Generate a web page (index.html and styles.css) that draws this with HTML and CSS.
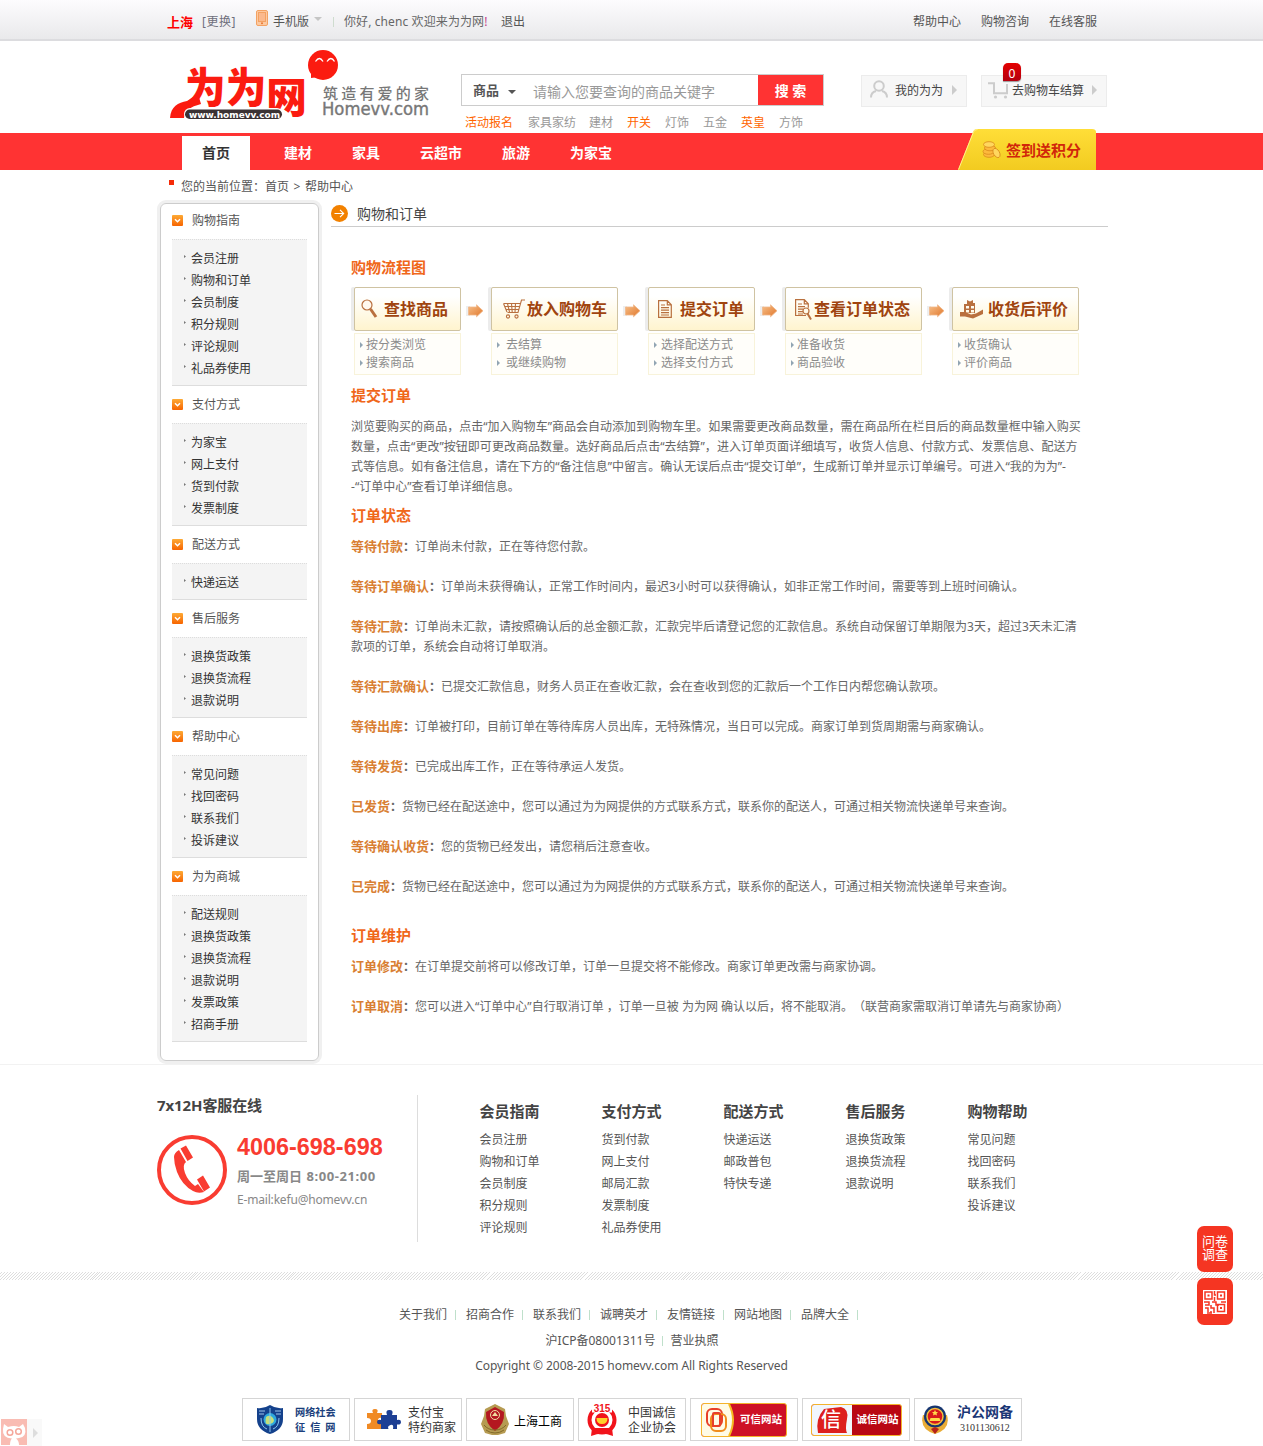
FILE: index.html
```html
<!DOCTYPE html>
<html lang="zh-CN">
<head>
<meta charset="utf-8">
<title>帮助中心 - 为为网</title>
<link rel="stylesheet" href="styles.css">
</head>
<body>
<svg width="0" height="0" class="defs" aria-hidden="true">
  <defs>
    <linearGradient id="orange" x1="0" y1="0" x2="1" y2="1"><stop offset="0" stop-color="#f7c08a"/><stop offset="1" stop-color="#e0762a"/></linearGradient>
    <linearGradient id="yellow" x1="0" y1="0" x2="0" y2="1"><stop offset="0" stop-color="#ffde38"/><stop offset="1" stop-color="#f2cb20"/></linearGradient>
    <linearGradient id="fold" x1="0" y1="0" x2="0" y2="1"><stop offset="0" stop-color="#fdaa35"/><stop offset="1" stop-color="#f76400"/></linearGradient>
    <symbol id="toggle" viewBox="0 0 11 11"><rect width="11" height="11" rx="1" fill="url(#fold)"/><path d="M3 4.2 5.5 6.7 8 4.2" fill="none" stroke="#fff" stroke-width="1.5"/></symbol>
    <symbol id="arrow" viewBox="0 0 20 14"><path d="M0 2h4v10H0z" fill="#eee"/><path d="M2.500 3h8V.8l6.500 6-6.500 6V11h-8z" fill="url(#orange)" stroke="#f0b88a" stroke-width=".8"/></symbol>
  </defs>
</svg>

<div class="topbar">
  <div class="wrap topbar-in">
    <b class="city">上海</b>
    <a class="change">[更换]</a>
    <svg class="phone-ico" width="12" height="16" viewBox="0 0 12 16"><rect x=".5" y=".5" width="11" height="15" rx="1.500" fill="#fdc9a0" stroke="#f3a263"/><rect x="2.500" y="2.500" width="7" height="9" fill="#fbb98d" stroke="#f3a263"/><circle cx="6" cy="13.300" r="1" fill="#e97834"/></svg>
    <a class="mobile">手机版</a>
    <i class="caret-light"></i>
    <i class="bar"></i>
    <span class="hello">你好, chenc 欢迎来为为网<em>!</em></span>
    <a class="logout">退出</a>
    <nav class="top-right"><a>帮助中心</a><a>购物咨询</a><a>在线客服</a></nav>
  </div>
</div>

<header class="wrap header">
  <svg class="logo" width="262" height="72" viewBox="0 0 262 72">
    <path d="M0 68C1 56 8 53 17 51L28 44 31 54C20 57 15 60 14 68Z" fill="#fb1b10"/>
    <text x="15" y="53" class="logo-cn" textLength="122" lengthAdjust="spacingAndGlyphs">为为<tspan dy="10">网</tspan></text>
    <rect x="14" y="58" width="99" height="12" rx="6" fill="#fff"/>
    <rect x="15" y="59.500" width="97" height="9.500" rx="4.700" fill="#3b3234"/>
    <text x="19" y="67.500" class="logo-url" textLength="91" lengthAdjust="spacingAndGlyphs">www.homevv.com</text>
    <circle cx="153" cy="15" r="15" fill="#fb1b10"/>
    <path d="M141 20v8l8-1z" fill="#fb1b10"/>
    <path d="M145.500 11.500q4-6 7.500 0M157 11.500q4-6 7.500 0" fill="none" stroke="#fff" stroke-width="1.300"/>
    <text x="153" y="48.500" class="logo-tag" textLength="106">筑造有爱的家</text>
    <text x="152" y="64.500" class="logo-en" textLength="107" lengthAdjust="spacingAndGlyphs">Homevv.com</text>
  </svg>
  <div class="search">
    <div class="search-box">
      <b class="kind">商品</b><i class="caret-dark"></i>
      <span class="ph">请输入您要查询的商品关键字</span>
      <b class="go">搜 索</b>
    </div>
    <div class="hot"><a class="on">活动报名</a><a>家具家纺</a><a>建材</a><a class="on">开关</a><a>灯饰</a><a>五金</a><a class="on">英皇</a><a>方饰</a></div>
  </div>
  <a class="pill mine">
    <svg width="18" height="18" viewBox="0 0 18 18" fill="none" stroke="#ccc" stroke-width="2"><circle cx="9" cy="6" r="4.800"/><path d="M1 17.500c0-4 3-6 5-6.500M17 17.500c0-4-3-6-5-6.500"/></svg>
    <span>我的为为</span><i class="tri"></i>
  </a>
  <a class="pill cart">
    <svg width="20" height="17" viewBox="0 0 20 17"><path d="M0 1.200h6v10h13V2" fill="none" stroke="#ccc" stroke-width="2"/><circle cx="7.500" cy="15" r="1.600" fill="#ccc"/><circle cx="17.500" cy="15" r="1.600" fill="#ccc"/></svg>
    <span>去购物车结算</span><i class="tri"></i>
    <b class="count">0</b>
  </a>
</header>

<div class="nav">
  <div class="wrap nav-in">
    <a class="cur">首页</a><a>建材</a><a>家具</a><a>云超市</a><a>旅游</a><a>为家宝</a>
    <div class="sign">
      <svg class="sign-bg" width="138" height="41" viewBox="0 0 138 41"><path d="M0 41 15 3q1-3 4-3h115q4 0 4 3v38z" fill="url(#yellow)"/><path d="M.5 40.500 15.500 3q1-2.500 4-2.500" fill="none" stroke="#fff08a"/></svg>
      <svg class="coins" width="19" height="18" viewBox="0 0 19 18" fill="#fdb93c" stroke="#d98a1c" stroke-width=".8"><ellipse cx="7" cy="13.500" rx="5.500" ry="2.800"/><ellipse cx="6.500" cy="10.500" rx="5.500" ry="2.800"/><ellipse cx="8" cy="7" rx="5.500" ry="2.800"/><ellipse cx="7" cy="3.500" rx="5.500" ry="2.800" fill="#ffd75e"/><ellipse cx="14.500" cy="12" rx="3" ry="5" transform="rotate(-30 14.500 12)" fill="#ffd75e"/></svg>
      <b>签到送积分</b>
    </div>
  </div>
</div>

<div class="wrap crumb"><i></i><span>您的当前位置：</span><a>首页</a><s>&gt;</s><span>帮助中心</span></div>

<div class="wrap body">
  <aside class="side">
    <h3><svg width="11" height="11"><use href="#toggle"/></svg>购物指南</h3>
    <ul><li>会员注册</li><li>购物和订单</li><li>会员制度</li><li>积分规则</li><li>评论规则</li><li>礼品券使用</li></ul>
    <h3><svg width="11" height="11"><use href="#toggle"/></svg>支付方式</h3>
    <ul><li>为家宝</li><li>网上支付</li><li>货到付款</li><li>发票制度</li></ul>
    <h3><svg width="11" height="11"><use href="#toggle"/></svg>配送方式</h3>
    <ul><li>快递运送</li></ul>
    <h3><svg width="11" height="11"><use href="#toggle"/></svg>售后服务</h3>
    <ul><li>退换货政策</li><li>退换货流程</li><li>退款说明</li></ul>
    <h3><svg width="11" height="11"><use href="#toggle"/></svg>帮助中心</h3>
    <ul><li>常见问题</li><li>找回密码</li><li>联系我们</li><li>投诉建议</li></ul>
    <h3><svg width="11" height="11"><use href="#toggle"/></svg>为为商城</h3>
    <ul><li>配送规则</li><li>退换货政策</li><li>退换货流程</li><li>退款说明</li><li>发票政策</li><li>招商手册</li></ul>
  </aside>

  <main class="main">
    <h1><svg width="17" height="17" viewBox="0 0 17 17"><circle cx="8.500" cy="8.500" r="8.500" fill="#f28100"/><path d="M3.500 8.500h9M9 4.800l3.700 3.700L9 12.200" fill="none" stroke="#fff" stroke-width="1.100"/></svg>购物和订单</h1>
    <div class="article">
      <h2>购物流程图</h2>
      <div class="flow">
        <div class="step s1">
          <div class="card"><svg width="17" height="20" viewBox="0 0 17 20"><circle cx="6" cy="6" r="5" fill="#fff8ee" stroke="#b9703f" stroke-width="1.200"/><path d="M9.500 10 15 18" stroke="#b9703f" stroke-width="3"/></svg>查找商品</div>
          <ul><li>按分类浏览</li><li>搜索商品</li></ul>
        </div>
        <svg class="next" width="20" height="14"><use href="#arrow"/></svg>
        <div class="step s2">
          <div class="card"><svg width="22" height="20" viewBox="0 0 22 20" fill="none" stroke="#b9703f" stroke-width="1.100"><path d="M22 1h-3.500L15 13.500H4.500M.5 4.500H17M.5 4.500 4 13M4.500 4.500 6.500 13M8.500 4.500l.7 8.500M12.500 4.500 12 13M2 7.500h14.500M3 10.500h12.500"/><circle cx="5" cy="17.500" r="1.600"/><circle cx="13.500" cy="17.500" r="1.600"/></svg>放入购物车</div>
          <ul><li>去结算</li><li>或继续购物</li></ul>
        </div>
        <svg class="next" width="20" height="14"><use href="#arrow"/></svg>
        <div class="step s3">
          <div class="card"><svg width="14" height="18" viewBox="0 0 14 18" fill="none" stroke="#b9703f" stroke-width="1.200"><path d="M.6.6h8.700l4 4.200v12.600H.6zM9.300.6v4.200h4M3 5h4M3 7.700h8M3 10.200h8M3 12.600h8M3 15h8"/></svg>提交订单</div>
          <ul><li>选择配送方式</li><li>选择支付方式</li></ul>
        </div>
        <svg class="next" width="20" height="14"><use href="#arrow"/></svg>
        <div class="step s4">
          <div class="card"><svg width="17" height="21" viewBox="0 0 17 21" fill="none" stroke="#b9703f" stroke-width="1.200"><path d="M11 16.500H.6V.6h8.700l4 4.200v4M9.300.6v4.200h4M3 5h4M3 7.700h7M3 10.200h5M3 12.600h5M3 15h5"/><circle cx="11" cy="12" r="3"/><path d="m12.500 14.500 3.500 6" stroke-width="2"/></svg>查看订单状态</div>
          <ul><li>准备收货</li><li>商品验收</li></ul>
        </div>
        <svg class="next" width="20" height="14"><use href="#arrow"/></svg>
        <div class="step s5">
          <div class="card"><svg width="24" height="20" viewBox="0 0 24 20" fill="#b9703f"><path d="M7 1l3 1.500L13 1v3h2v10H4V5h3zM6 7v2.500h3V7zm5 0v2.500h3V7zM6 11v2.500h3V11zm5 0v2.500h3V11z" fill-rule="evenodd"/><path d="M0 13h5l6 2.500 5-1 7-4v4.500l-10 4.500L5 17.500H0z"/></svg>收货后评价</div>
          <ul><li>收货确认</li><li>评价商品</li></ul>
        </div>
      </div>
      <h2>提交订单</h2>
      <p class="intro">浏览要购买的商品，点击“加入购物车”商品会自动添加到购物车里。如果需要更改商品数量，需在商品所在栏目后的商品数量框中输入购买<br>数量，点击“更改”按钮即可更改商品数量。选好商品后点击“去结算”，进入订单页面详细填写，收货人信息、付款方式、发票信息、配送方<br>式等信息。如有备注信息，请在下方的“备注信息”中留言。确认无误后点击“提交订单”，生成新订单并显示订单编号。可进入“我的为为”-<br>-“订单中心”查看订单详细信息。</p>
      <h2 class="tight">订单状态</h2>
      <p><strong>等待付款</strong><b>：</b>订单尚未付款，正在等待您付款。</p>
      <p><strong>等待订单确认</strong><b>：</b>订单尚未获得确认，正常工作时间内，最迟3小时可以获得确认，如非正常工作时间，需要等到上班时间确认。</p>
      <p><strong>等待汇款</strong><b>：</b>订单尚未汇款，请按照确认后的总金额汇款，汇款完毕后请登记您的汇款信息。系统自动保留订单期限为3天，超过3天未汇清<br>款项的订单，系统会自动将订单取消。</p>
      <p><strong>等待汇款确认</strong><b>：</b>已提交汇款信息，财务人员正在查收汇款，会在查收到您的汇款后一个工作日内帮您确认款项。</p>
      <p><strong>等待出库</strong><b>：</b>订单被打印，目前订单在等待库房人员出库，无特殊情况，当日可以完成。商家订单到货周期需与商家确认。</p>
      <p><strong>等待发货</strong><b>：</b>已完成出库工作，正在等待承运人发货。</p>
      <p><strong>已发货</strong><b>：</b>货物已经在配送途中，您可以通过为为网提供的方式联系方式，联系你的配送人，可通过相关物流快递单号来查询。</p>
      <p><strong>等待确认收货</strong><b>：</b>您的货物已经发出，请您稍后注意查收。</p>
      <p><strong>已完成</strong><b>：</b>货物已经在配送途中，您可以通过为为网提供的方式联系方式，联系你的配送人，可通过相关物流快递单号来查询。</p>
      <h2 class="last">订单维护</h2>
      <p><strong>订单修改</strong><b>：</b>在订单提交前将可以修改订单，订单一旦提交将不能修改。商家订单更改需与商家协调。</p>
      <p><strong>订单取消</strong><b>：</b>您可以进入“订单中心”自行取消订单 ，订单一旦被 为为网 确认以后，将不能取消。（联营商家需取消订单请先与商家协商）</p>
    </div>
  </main>
</div>

<footer>
  <div class="wrap service">
    <div class="hotline">
      <h4>7x12H客服在线</h4>
      <div class="call">
        <svg width="70" height="70" viewBox="0 0 70 70"><circle cx="35" cy="35" r="33" fill="none" stroke="#f93c31" stroke-width="4"/><path d="M17 22q0-4 5-7l7 12q-4 3-1 11t10 13l3-2 6 8q-6 2-11-1-11-6-16-19-3-8-3-15zM23.500 13.500 29 10.500l7 12-5.500 3.500zM40 44.500l6-4L53 52.500l-6 4z" fill="#f93c31"/></svg>
        <div><b class="tel">4006-698-698</b><b class="hours">周一至周日 <span>8:00-21:00</span></b><span class="mail">E-mail:kefu@homevv.cn</span></div>
      </div>
    </div>
    <div class="cols">
      <dl><dt>会员指南</dt><dd>会员注册</dd><dd>购物和订单</dd><dd>会员制度</dd><dd>积分规则</dd><dd>评论规则</dd></dl>
      <dl><dt>支付方式</dt><dd>货到付款</dd><dd>网上支付</dd><dd>邮局汇款</dd><dd>发票制度</dd><dd>礼品券使用</dd></dl>
      <dl><dt>配送方式</dt><dd>快递运送</dd><dd>邮政普包</dd><dd>特快专递</dd></dl>
      <dl><dt>售后服务</dt><dd>退换货政策</dd><dd>退换货流程</dd><dd>退款说明</dd></dl>
      <dl><dt>购物帮助</dt><dd>常见问题</dd><dd>找回密码</dd><dd>联系我们</dd><dd>投诉建议</dd></dl>
    </div>
  </div>
  <div class="hatch"></div>
  <div class="links"><a>关于我们</a><a>招商合作</a><a>联系我们</a><a>诚聘英才</a><a>友情链接</a><a>网站地图</a><a>品牌大全</a></div>
  <div class="icp"><span>沪ICP备08001311号</span><i></i><span>营业执照</span></div>
  <div class="copy">Copyright © 2008-2015 homevv.com All Rights Reserved</div>
  <div class="badges">
    <div class="badge b1"><svg width="28" height="30" viewBox="0 0 28 30"><path d="M1 3q7 1 13-3 6 4 13 3v11q0 11-13 15Q1 25 1 14z" fill="#14418c"/><path d="M3 6h6M3 9h5M19 6h6M20 9h5" stroke="#9dc4ea" stroke-width="1"/><circle cx="14" cy="14.500" r="6.500" fill="#2fa9dd"/><path d="M10 12q4-3 7 1t-3 6-4-7z" fill="#c5e07a"/><path d="M5 13q0 9 6 11M23 13q0 9-6 11M14 3v24" stroke="#8cc6ee" fill="none"/></svg><span>网络社会<br><u>征信网</u></span></div>
    <div class="badge b2"><svg width="36" height="22" viewBox="0 0 36 22"><path d="M1 4h6q-2-4 2-4t2 4h5v5q-4-1-4 2.500t4 2V20H1v-5q4 0 4-3T1 9z" fill="#f08a24"/><path d="M15 6h6q-2-5 2.500-5T26 6h5v5q4-1 4 2t-4 2.500V20h-4q1-5-2.500-4t-2 4H15v-5q-4 1-4-2t4-2z" fill="#1d3f94"/></svg><span>支付宝<br>特约商家</span></div>
    <div class="badge b3"><svg width="30" height="32" viewBox="0 0 30 32"><path d="M15 0 25 5l1 7 3 8-4 9-7 2H12l-7-2-4-9 3-8 1-7z" fill="#b69b52"/><path d="M15 3 24 8q1 12-9 19Q5 20 6 8z" fill="#b41720"/><circle cx="15" cy="11" r="4.500" fill="none" stroke="#f1dda0"/><path d="m12 12 3-4 3 4z" fill="#f1dda0"/><path d="M4 21q4 5 11 5t11-5M6 26q4 3 9 3t9-3" fill="none" stroke="#826b29"/></svg><span>上海工商</span></div>
    <div class="badge b4"><svg width="30" height="34" viewBox="0 0 30 34"><circle cx="15" cy="17" r="12.500" fill="none" stroke="#f1131b" stroke-width="4"/><path d="M5 0h20v9.500H5z" fill="#fff"/><text x="15" y="8.500" text-anchor="middle" class="n315">315</text><circle cx="15" cy="17" r="7" fill="#f1131b"/><path d="M9.500 15h11q0 6-5.500 6t-5.500-6z" fill="#ffd02a"/><path d="M5 25h20l1 8q-6-2.500-11-2.500t-11 2.500z" fill="#f1131b"/></svg><span>中国诚信<br>企业协会</span></div>
    <div class="badge b5"><div class="plate"><svg width="34" height="32" viewBox="0 0 34 32"><path d="M0 0h27q8 16 0 32H0z" fill="#fffbe6"/><path d="M27 0q8 16 0 32" fill="none" stroke="#f6ba21" stroke-width="2"/><g fill="none" stroke-width="2"><rect x="5" y="5" width="15" height="17" rx="5" stroke="#e8402a"/><rect x="9" y="10" width="15" height="17" rx="5" stroke="#f08c1c"/><rect x="11" y="9" width="7" height="13" rx="1" stroke="#e8402a"/></g></svg><span>可信网站</span></div></div>
    <div class="badge b6"><div class="plate"><svg width="40" height="30" viewBox="0 0 40 30"><path d="M0 0h40v30H0z" fill="#f1f6fc"/><path d="M12 4 29 2q8 2 6 12t0 14H6Q3 14 12 4z" fill="#dd1f1d"/><text x="9" y="22" class="xin">信</text></svg><span>诚信网站</span></div></div>
    <div class="badge b7"><svg width="28" height="30" viewBox="0 0 28 30"><path d="M2 10q-4 14 12 19 16-5 12-19z" fill="#e9ac36"/><circle cx="14" cy="11.500" r="11" fill="#16356f"/><circle cx="14" cy="11.500" r="8" fill="#d8171c" stroke="#f2c23e" stroke-width="1.500"/><path d="m14 5 1 2h2l-1.500 1.500.5 2-2-1-2 1 .5-2L11 7h2zM9.500 13h9l1 3h-11z" fill="#ffd84a"/><path d="m10 24 4-2 4 2-4 5z" fill="#b5201a"/></svg><span><b>沪公网备</b><br><small>3101130612</small></span></div>
  </div>
</footer>

<div class="float">
  <a>问卷<br>调查</a>
  <a><svg width="24" height="24" viewBox="0 0 24 24"><path d="M0 0h24v24H0z" fill="#fff"/><g fill="none" stroke="#f53522" stroke-width="1.500"><path d="M2 2h7v7H2zM14.500 2h7v7h-7zM14.500 14.500h7v7h-7z"/><path d="M1 12h5v3H2M9 12h4v3h3M18 12h5M11.500 1v4h1.500M11.500 7v4M2 18h3v4M8 15v3h3v5M4 23h5M8 21v2"/></g><g fill="#f53522"><path d="M4.500 4.500h2v2h-2zM17 4.500h2v2h-2zM17 17h2v2h-2z"/></g></svg></a>
</div>
<div class="pet">
  <svg width="26" height="26" viewBox="0 0 26 26"><path d="M0 0h26v26H0z" fill="#f9bcb3"/><path d="M3 5l4 3q6-2 11 0l4-3 2 4q2 9-6 10l-3 .5q3 2 3 6.500H9q0-5 2-6.500Q1 19 2 10z" fill="#fff"/><circle cx="9" cy="13.500" r="2.800" fill="none" stroke="#f5a79b" stroke-width="1.500"/><circle cx="17.500" cy="12.500" r="2.800" fill="none" stroke="#f5a79b" stroke-width="1.500"/></svg>
  <span><i></i></span>
</div>
</body>
</html>
```
FILE: styles.css
```css
* { box-sizing: border-box; margin: 0; padding: 0; }
body {
  font: 12px/20px "Noto Sans", "Noto Sans CJK SC", sans-serif;
  text-spacing-trim: space-all;
  color: #555;
  background: #fff;
  height: 1446px;
  overflow: hidden;
  position: relative;
}
ul { list-style: none; }
em, i { font-style: normal; }
svg { display: block; flex: none; }
.defs { position: absolute; }
.wrap { width: 950px; margin-left: 157px; }
span, a, b { white-space: nowrap; }

/* top bar */
.topbar {
  height: 41px;
  background: linear-gradient(#fdfcfe, #e9e9eb);
  border-bottom: 2px solid #dcdcdf;
}
.topbar-in { display: flex; height: 41px; align-items: center; padding: 2px 0 0 10px; }
.city { width: 35px; font-size: 13px; line-height: 18px; color: #f00; }
.change { width: 54px; color: #6f6f7c; letter-spacing: .5px; }
.phone-ico { margin: -7px 5px 0 0; }
.mobile { width: 41px; }
.caret-light { border: 4px solid transparent; border-top-color: #c5c5c5; border-bottom: 0; margin-top: -5px; }
.bar { width: 1px; height: 10px; background: #cfdccf; margin: 0 10px 0 11px; }
.hello { width: 157px; color: #666; letter-spacing: .1px; }
.hello em { color: #c3438a; }
.top-right { display: flex; gap: 20px; margin-left: auto; padding-right: 10px; }

/* header */
.header { height: 92px; display: flex; position: relative; }
.logo { margin: 9px 0 0 13px; overflow: visible; }
.logo-cn { font: 900 42px "Noto Sans CJK SC", sans-serif; fill: #fb1b10; }
.logo-url { font: bold 9px "DejaVu Sans", sans-serif; fill: #fff; }
.logo-tag { font: 500 15px "Noto Sans CJK SC", sans-serif; fill: #777; }
.logo-en { font: 500 17px "DejaVu Sans", sans-serif; fill: #777; stroke: #777; stroke-width: .4px; }
.search { margin: 33px 0 0 29px; width: 363px; }
.search-box { display: flex; height: 32px; border: 1px solid #ccc; align-items: center; padding-left: 11px; }
.kind { font-size: 13px; width: 35px; color: #555; }
.caret-dark { border: 4px solid transparent; border-top-color: #555; border-bottom: 0; margin: 3px 17px 0 0; }
.ph { font-size: 14px; color: #999; flex: 1; padding-top: 3px; }
.go { width: 65px; height: 30px; font-size: 14px; line-height: 31px; text-align: center; color: #fff; background: #f33; }
.hot { display: flex; gap: 14px; padding: 7px 0 0 4px; color: #999; }
.hot a:nth-child(2) { margin-right: -1px; }
.hot .on { color: #f60; }
.hot a:first-child { margin-right: 1px; }
.pill { display: flex; align-items: center; height: 32px; border: 1px solid #ececec; background: #f7f7f7; margin-top: 34px; color: #444; position: relative; }
.mine { width: 106px; margin-left: 37px; padding-left: 8px; }
.mine svg { margin: -4px 7px 0 0; }
.mine span { width: 57px; }
.cart { width: 126px; margin-left: 14px; padding-left: 6px; }
.cart svg { margin: -2px 4px 0 0; }
.cart span { width: 80px; }
.tri { border: 5px solid transparent; border-left-color: #ccc; border-right: 0; margin-top: -2px; }
.count { position: absolute; left: 21px; top: -13px; width: 18px; height: 18px; border-radius: 5px 5px 4px 0; background: linear-gradient(#e40000, #b30010); color: #fff; font-weight: 400; text-align: center; line-height: 21px; box-shadow: 0 1px 1px #999; }

/* navigation */
.nav { height: 37px; background: #f33; }
.nav-in { display: flex; padding: 3px 0 0 25px; position: relative; }
.nav-in > a { padding: 0 20px; font-size: 14px; font-weight: 700; line-height: 33px; height: 34px; color: #fff; }
.nav-in .cur { background: #fff; color: #333; margin-right: 14px; }
.sign { position: absolute; left: 801px; top: -4px; width: 138px; height: 41px; }
.sign-bg, .coins { position: absolute; left: 0; top: 0; }
.coins { left: 24px; top: 12px; }
.sign b { position: relative; display: block; margin: 11px 0 0 48px; font-size: 15px; color: #d1260a; }

.crumb { display: flex; height: 33px; padding: 7px 0 0 12px; }
.crumb i { width: 5px; height: 5px; background: #f52b08; margin: 3px 7px 0 0; }
.crumb s { text-decoration: none; width: 16px; text-align: center; }

/* sidebar */
.body { display: flex; align-items: flex-start; height: 861px; }
.side { width: 159px; height: 858px; margin: 0 12px 0 3px; padding: 0 11px; border: 1px solid #ccc; border-radius: 6px; box-shadow: 0 0 0 3px #f0f0f0; flex: none; }
.side h3 { display: flex; align-items: center; height: 37px; font-size: 12px; font-weight: 400; gap: 9px; }
.side h3:first-child { margin-top: -2px; }
.side ul { width: 135px; background: #f4f4f4; border-top: 1px dotted #ddd; border-bottom: 1px solid #ddd; padding: 8px 0 5px 12px; color: #333; }
.side li { display: flex; line-height: 22px; }
.side li::before { content: ""; width: 2px; height: 3px; background: #777; clip-path: polygon(0 0, 100% 50%, 0 100%); margin: 7px 5px 0 0; }

/* article */
.main { width: 777px; flex: none; }
.main h1 { display: flex; align-items: center; gap: 9px; height: 24px; font-size: 14px; line-height: 22px; font-weight: 400; color: #444; border-bottom: 1px solid #ccc; padding-bottom: 2px; }
.article { padding: 30px 0 0 20px; color: #666; }
.article h2 { font-size: 15px; line-height: 20px; color: #f0671a; }
.article p { white-space: nowrap; margin-bottom: 20px; }
.article .intro { letter-spacing: .02px; }
.article h2 + p { margin-top: 12px; }
.article h2.tight { margin-top: -12px; }
.article h2.last { margin-top: 28px; }
.article strong { font-size: 13px; line-height: 1; color: #d97f33; }
.flow { display: flex; height: 89px; margin: 10px 0 9px; padding-left: 3px; }
.next { margin: 17px -1px 0 5px; }
.step { flex: none; margin-left: 6px; }
.step:first-child { margin-left: 0; }
.card { display: flex; align-items: center; height: 44px; border: 1px solid #cfc3a2; border-radius: 2px; background: linear-gradient(#fff 20%, #fff4ce); box-shadow: -3px 0 0 #ececec; font-size: 16px; font-weight: 700; color: #a0440f; white-space: nowrap; }
.step ul { height: 42px; margin-top: 2px; padding-top: 2px; border: 1px solid #f8f3da; background: #fffefa; line-height: 18px; color: #8c8c8c; }
.step li { display: flex; align-items: center; }
.step li::before { content: ""; border: 3px solid transparent; border-left-color: #92a5b3; border-right: 0; margin: 0 3px 0 5px; }
.s1 { width: 107px; } .s1 .card { padding-left: 6px; gap: 6px; }
.s2 { width: 127px; } .s2 .card { padding-left: 11px; gap: 2px; }
.s2 li::before { margin-right: 6px; }
.s3 { width: 107px; } .s3 .card { padding-left: 9px; gap: 8px; }
.s3 li::before { margin-right: 4px; }
.s4 { width: 137px; } .s4 .card { padding-left: 9px; gap: 2px; }
.s5 { width: 127px; } .s5 .card { padding-left: 7px; gap: 4px; }

/* footer */
footer { border-top: 1px solid #f2f2f2; }
.service { display: flex; height: 207px; padding-top: 30px; }
.hotline { width: 261px; height: 147px; border-right: 1px solid #ddd; flex: none; }
.hotline h4 { font-size: 15px; line-height: 20px; color: #444; letter-spacing: -.1px; }
.call { display: flex; margin-top: 20px; gap: 10px; }
.call div { display: flex; flex-direction: column; }
.tel { font: bold 23.4px/24px "Liberation Sans", sans-serif; color: #f93c31; }
.hours { font-size: 13px; line-height: 24px; margin-top: 5px; color: #888; }
.hours span { letter-spacing: .6px; margin-left: 1px; }
.mail { line-height: 24px; color: #888; letter-spacing: -.18px; }
.cols { display: flex; margin: 6px 0 0 61.5px; color: #555; }
.cols dl { width: 122px; flex: none; }
.cols dt { font-size: 15px; font-weight: 700; line-height: 20px; color: #444; margin-bottom: 8px; }
.cols dd { line-height: 22px; }
.hatch { height: 8px; background: repeating-linear-gradient(135deg, #fff 0 1.400px, #ddd 1.400px 2.100px); }
.links { display: flex; padding: 25px 0 0 399px; }
.links a { width: 67px; display: flex; align-items: center; }
.links a::after, .icp i { content: ""; width: 1px; height: 10px; background: #bfe0cb; margin-left: 8px; }
.icp { display: flex; align-items: center; justify-content: center; padding: 6px 0 0 1px; }
.icp i { margin: 0 7px; }
.copy { text-align: center; padding-top: 5px; letter-spacing: -.06px; }
.badges { display: flex; gap: 4px; margin: 22px 0 0 242px; }
.badge { width: 108px; height: 43px; border: 1px solid #d5d5d5; display: flex; align-items: center; flex: none; line-height: 15px; color: #333; }
.b1 { padding-left: 13px; gap: 11px; color: #1b3f7d; font-size: 10.200px; font-weight: 700; }
.b1 u { text-decoration: none; letter-spacing: 5px; }
.b2 { padding-left: 11px; gap: 6px; }
.b3 { padding-left: 13px; gap: 4px; color: #000; }
.b3 span { margin-top: 3px; }
.b4 { padding-left: 8px; gap: 11px; }
.n315 { font: bold 10px "Liberation Sans", sans-serif; fill: #f1131b; }
.b5, .b6 { justify-content: center; }
.plate { display: flex; align-items: center; width: 86px; height: 34px; border: 1px solid #f4b32c; border-radius: 3px; background: #ce1126; overflow: hidden; color: #fff; font-size: 10.500px; font-weight: 700; }
.b5 .plate span { margin-left: 4px; }
.b6 .plate { width: 91px; height: 32px; background: #b90713; }
.b6 .plate span { margin-left: 5px; }
.xin { font: 500 20px "Noto Sans CJK SC", sans-serif; fill: #fff; }
.b7 { padding-left: 6px; gap: 8px; line-height: 14px; }
.b7 b { font-size: 14px; color: #1b3776; }
.b7 small { font: 10px/12px "Liberation Serif", serif; margin-left: 3px; }

/* side widgets */
.float { position: absolute; left: 1197px; top: 1226px; display: grid; gap: 6px; }
.float a { width: 36px; height: 46px; border-radius: 7px; background: #f53522; color: #fff; font-size: 13px; line-height: 13px; display: flex; align-items: center; justify-content: center; }
.float a:first-child { padding-bottom: 2px; }
.float a:last-child { height: 47px; }
.pet { position: absolute; left: 1px; top: 1419px; display: flex; }
.pet span { width: 15px; height: 27px; background: #f9f9f9; padding: 9px 0 0 6px; }
.pet i { display: block; width: 0; border: 5px solid transparent; border-left-color: #ddd; border-right: 0; }
```
